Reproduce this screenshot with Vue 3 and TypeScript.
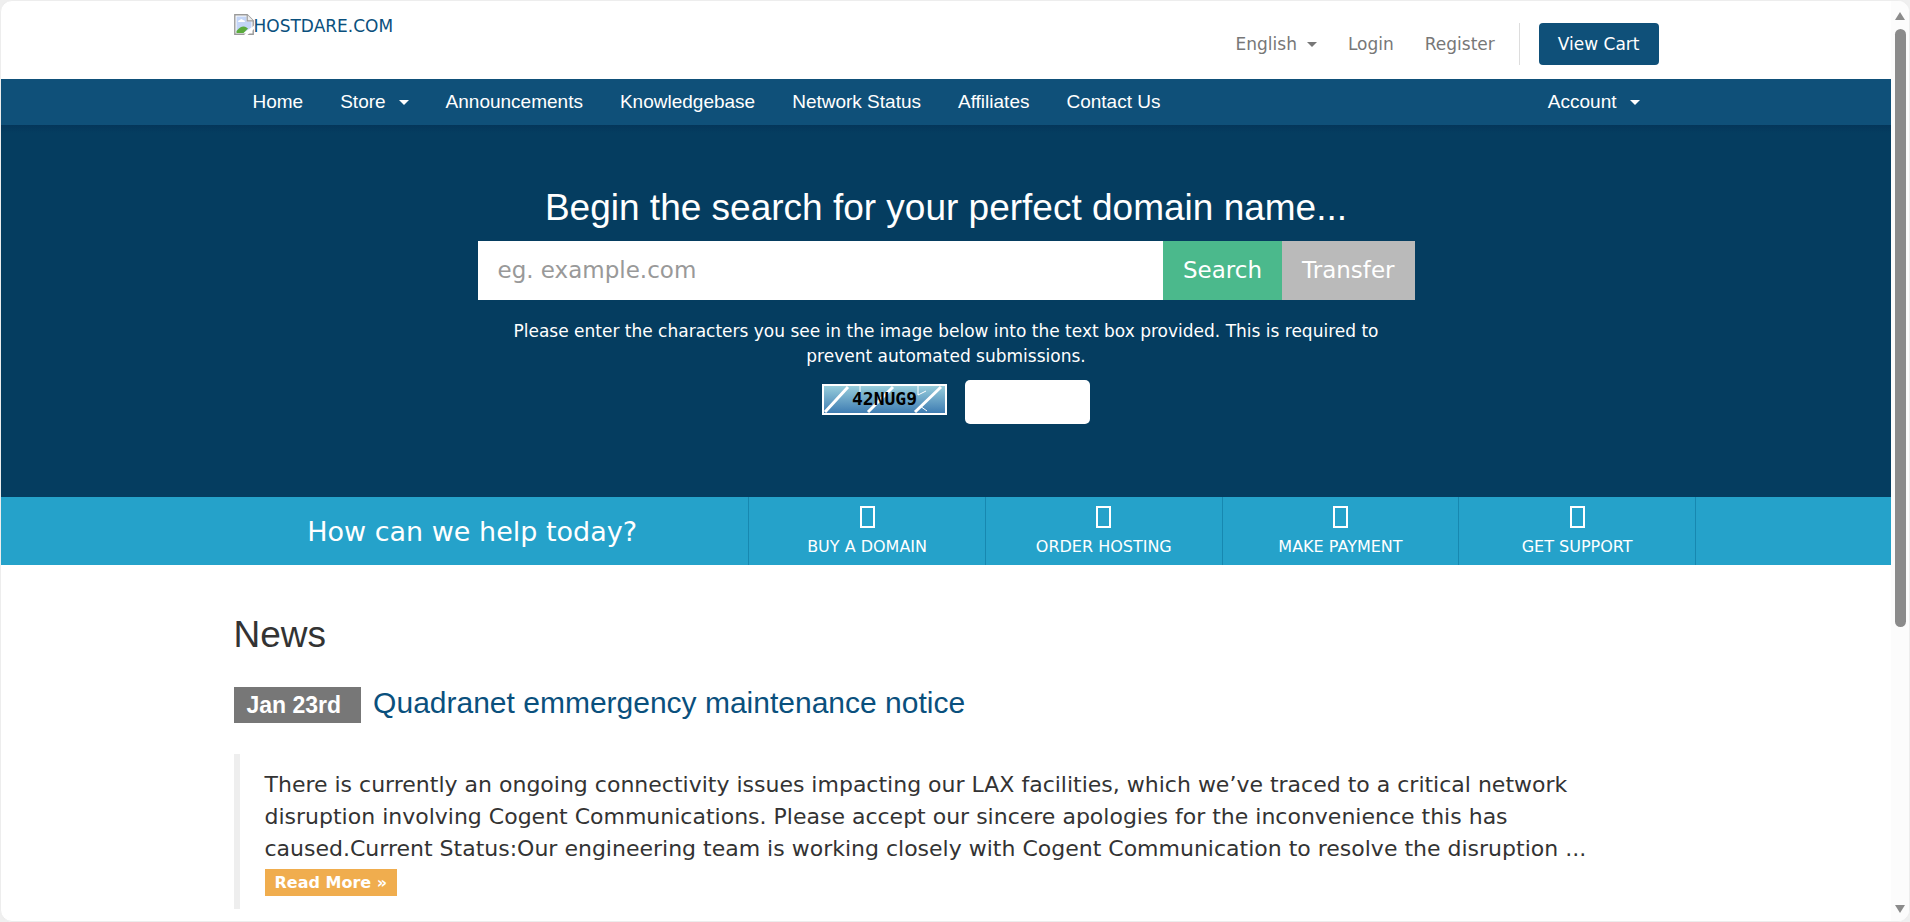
<script setup lang="ts">
import { ref } from 'vue'

interface NavItem {
  label: string
  menu?: boolean
}

const navItems: NavItem[] = [
  { label: 'Home' },
  { label: 'Store', menu: true },
  { label: 'Announcements' },
  { label: 'Knowledgebase' },
  { label: 'Network Status' },
  { label: 'Affiliates' },
  { label: 'Contact Us' },
]

const shortcuts: string[] = ['Buy a Domain', 'Order Hosting', 'Make Payment', 'Get Support']

const domain = ref('')
const captcha = ref('')
</script>

<template>
  <div class="window">
    <div class="page">
      <header class="top">
        <div class="container top-row">
          <a class="logo" href="#">
            <svg width="20" height="21" viewBox="0 0 20 21" aria-hidden="true">
              <path d="M.8.8h12.4l6 6v13.4H.8z" fill="#fff" stroke="#9a9a9a" stroke-width="1.4" />
              <path d="M2.5 2.5h10v5h5v6L9 19H2.5z" fill="#c3d5f6" />
              <path d="M4 8q0-2 2-2 1-2 3 0 2 0 2 2z" fill="#fff" />
              <path d="M2.5 19v-2Q8 10.500 12.500 13.500l1.500 1L9.500 19z" fill="#5bab3c" />
              <path d="M13.200.8v6h6" fill="#eee" stroke="#9a9a9a" stroke-width="1.200" />
              <path d="M20 11.500 10 21h3.500l6.500-6z" fill="#fff" />
            </svg>
            <span>HOSTDARE.COM</span>
          </a>
          <div class="tools">
            <button class="tool" type="button">English<i class="caret"></i></button>
            <a class="tool" href="#">Login</a>
            <a class="tool" href="#">Register</a>
            <a class="cart" href="#">View Cart</a>
          </div>
        </div>
      </header>

      <nav class="menu">
        <div class="container menu-row">
          <template v-for="item in navItems" :key="item.label">
            <button v-if="item.menu" class="menu-item" type="button">{{ item.label }}<i class="caret wide"></i></button>
            <a v-else class="menu-item" href="#">{{ item.label }}</a>
          </template>
          <button class="menu-item account" type="button">Account<i class="caret wide"></i></button>
        </div>
      </nav>

      <section class="hero">
        <form class="search" @submit.prevent>
          <h2>Begin the search for your perfect domain name...</h2>
          <div class="search-bar">
            <input v-model="domain" type="text" placeholder="eg. example.com" aria-label="Domain name" />
            <button class="find" type="submit">Search</button>
            <button class="transfer" type="button">Transfer</button>
          </div>
          <label class="hint" for="captcha">Please enter the characters you see in the image below into the text box provided. This is required to prevent automated submissions.</label>
          <div class="captcha">
            <svg width="125" height="31" viewBox="0 0 125 31" role="img" aria-label="Verification code">
              <defs>
                <linearGradient id="sky" x1="0" y1="0" x2="0" y2="1">
                  <stop offset="0" stop-color="#97cddb" />
                  <stop offset="1" stop-color="#3f7db3" />
                </linearGradient>
              </defs>
              <rect width="125" height="31" fill="#fff" />
              <rect x="2" y="2" width="121" height="27" fill="url(#sky)" />
              <g stroke="#fff" stroke-width="3" fill="none">
                <path d="M3 28 26 3M46 28 71 3M93 28 119 3" />
                <path d="M38 2v14M96 2v9l8-4M98 22l7 5" stroke-width="1" />
              </g>
              <text x="30" y="21">42NUG9</text>
            </svg>
            <input id="captcha" v-model="captcha" type="text" />
          </div>
        </form>
      </section>

      <section class="help">
        <div class="help-row">
          <p>How can we help today?</p>
          <a v-for="item in shortcuts" :key="item" class="shortcut" href="#">
            <i class="box"></i>
            <span>{{ item }}</span>
          </a>
        </div>
      </section>

      <main class="container news">
        <h2>News</h2>
        <div class="headline">
          <span class="date">Jan 23rd</span>
          <a href="#">Quadranet emmergency maintenance notice</a>
        </div>
        <blockquote>
          <p>There is currently an ongoing connectivity issues impacting our LAX facilities, which we’ve traced to a critical network disruption involving Cogent Communications. Please accept our sincere apologies for the inconvenience this has caused.Current Status:Our engineering team is working closely with Cogent Communication to resolve the disruption ...</p>
          <a class="more" href="#">Read More »</a>
        </blockquote>
      </main>
    </div>

    <div class="scrollbar" aria-hidden="true">
      <svg width="12" height="10" viewBox="0 0 12 10"><path d="M6 1 11 9H1z" /></svg>
      <div class="track"><div class="thumb"></div></div>
      <svg width="12" height="10" viewBox="0 0 12 10"><path d="M6 9 11 1H1z" /></svg>
    </div>
  </div>
</template>

<style>
body {
  background: #efefef;
}
</style>

<style scoped>
* {
  box-sizing: border-box;
}
.window {
  display: flex;
  height: 100vh;
  overflow: hidden;
  border: 1px solid #ededed;
  border-radius: 12px;
  background: #fff;
  font-family: Verdana, "DejaVu Sans", sans-serif;
  font-size: 17px;
  line-height: 25px;
  color: #333;
}
.page {
  flex: 1;
  min-width: 0;
  overflow: hidden;
}
a {
  color: #0a507d;
  text-decoration: none;
}
button,
input {
  margin: 0;
  border: 0;
  font: inherit;
}
button {
  padding: 0;
  background: none;
  cursor: pointer;
}
h2 {
  margin: 0;
  font: 500 37px/42px "Liberation Sans", Arial, sans-serif;
}
p {
  margin: 0;
}
.container {
  width: calc(100% - 38px);
  max-width: 1425px;
  margin: 0 auto;
}
.top-row {
  display: flex;
  justify-content: space-between;
  height: 78px;
}
.logo {
  display: flex;
  height: 24px;
  margin-top: 13px;
}
.tools {
  display: flex;
  align-items: center;
  gap: 31px;
  height: 42px;
  margin-top: 22px;
}
.tool {
  color: #777;
}
.caret {
  display: inline-block;
  margin-left: 10px;
  border: 5px solid transparent;
  border-top-color: currentColor;
  border-bottom: 0;
  vertical-align: middle;
}
.caret.wide {
  margin-left: 13px;
}
.cart {
  position: relative;
  margin-left: 13px;
  padding: 9px 19px 8px;
  border-radius: 4px;
  background: #0f5079;
  color: #fff;
}
.cart::before {
  content: "";
  position: absolute;
  top: 0;
  bottom: 0;
  left: -20px;
  border-left: 1px solid #ddd;
}
.menu {
  background: #0f5079;
}
.menu-row {
  display: flex;
  gap: 37px;
  padding: 0 19px;
}
.menu-item {
  color: #fff;
  font: 19px/46px "Liberation Sans", Arial, sans-serif;
}
.account {
  margin-left: auto;
}
.hero {
  padding: 62px 19px 73px;
  background: linear-gradient(#04365a, #053d60 8px);
  color: #fff;
  text-align: center;
}
.search {
  max-width: 937px;
  margin: 0 auto;
}
.search-bar {
  display: flex;
  height: 59px;
  margin-top: 12px;
  font-size: 23px;
}
.search-bar input {
  flex: 1;
  min-width: 0;
  padding: 0 20px;
}
.search-bar input::placeholder {
  color: #999;
  opacity: 1;
}
.search-bar button {
  padding: 0 20px;
  color: #fff;
}
.search-bar .find {
  background: #4bb98c;
}
.search-bar .transfer {
  background: #bababa;
}
.hint {
  display: block;
  padding: 19px 19px 0;
}
.captcha {
  display: flex;
  justify-content: center;
  gap: 18px;
  margin-top: 11px;
  padding-left: 19px;
}
.captcha svg {
  margin-top: 4px;
}
.captcha text {
  font: bold 18px "DejaVu Sans Mono", monospace;
}
.captcha input {
  width: 125px;
  height: 44px;
  padding: 0 15px;
  border-radius: 5px;
}
.help {
  background: #25a2ca;
}
.help-row {
  display: grid;
  grid-template-columns: 35fr repeat(4, 15fr);
  max-width: 1500px;
  height: 68px;
  margin: 0 auto;
  border-right: 1px solid #1788b0;
}
.help-row p {
  align-self: center;
  color: #fff;
  font-size: 27px;
  text-align: center;
}
.shortcut {
  display: flex;
  flex-direction: column;
  align-items: center;
  padding-top: 9px;
  border-left: 1px solid #1788b0;
  color: #fff;
  font-size: 16px;
  text-transform: uppercase;
}
.box {
  width: 15px;
  height: 22px;
  margin-bottom: 6px;
  border: 2px solid #fff;
}
.news {
  padding-top: 49px;
}
.headline {
  display: flex;
  align-items: center;
  gap: 12px;
  margin-top: 25px;
  font: 30px/44px "Liberation Sans", Arial, sans-serif;
}
.date {
  margin-top: 4px;
  padding: 0 20px 0 13px;
  background: #777;
  color: #fff;
  font-size: 23px;
  font-weight: bold;
  line-height: 36px;
}
blockquote {
  margin: 29px 0 0;
  padding: 15px 25px 12px;
  border-left: 6px solid #eee;
  font-size: 22px;
  line-height: 32px;
}
.more {
  display: inline-block;
  padding: 0 10px;
  background: #f0ad4e;
  color: #fff;
  font-size: 16px;
  font-weight: bold;
  line-height: 27px;
}
.scrollbar {
  display: flex;
  flex-direction: column;
  align-items: center;
  gap: 8px;
  width: 18px;
  padding: 10px 0 7px;
  background: #fcfcfc;
  fill: #8b8b8b;
}
.scrollbar svg {
  flex: none;
}
.track {
  flex: 1;
}
.thumb {
  width: 11px;
  height: 69%;
  border-radius: 6px;
  background: #8b8b8b;
}
</style>
